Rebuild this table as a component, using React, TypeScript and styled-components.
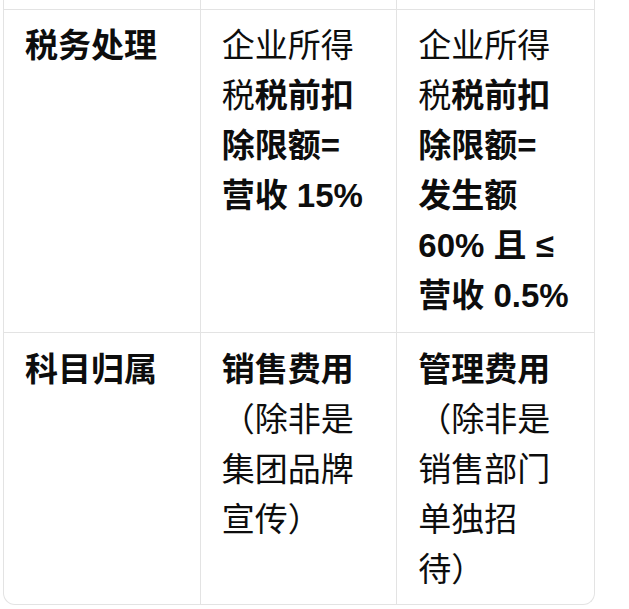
import React from 'react'
import styled, { createGlobalStyle } from 'styled-components'

const GlobalStyle = createGlobalStyle`
  html, body {
    margin: 0;
    padding: 0;
    background: #fff;
  }
  body {
    font-family: "Liberation Sans", "Noto Sans CJK SC", sans-serif;
    color: #0d0d0d;
  }
`

const Page = styled.div`
  padding-left: 3px;
  width: 592px;
`

const TableFrame = styled.div`
  border: 1px solid #e3e3e3;
  border-top: none;
  border-radius: 0 0 12px 12px;
  overflow: hidden;
`

const Table = styled.table`
  width: 100%;
  table-layout: fixed;
  border-collapse: separate;
  border-spacing: 0;
`

const Row = styled.tr<{ $cut?: boolean }>`
  td {
    height: ${p => (p.$cut ? '9px' : 'auto')};
    padding: ${p => (p.$cut ? '0' : '11px 21px 11px')};
  }
  &:last-child td {
    border-bottom: none;
    padding-top: 12px;
    padding-bottom: 9px;
  }
`

const Cell = styled.td<{ $head?: boolean }>`
  vertical-align: top;
  font-size: 33px;
  line-height: 50px;
  font-weight: ${p => (p.$head ? 700 : 400)};
  border-right: 1px solid #e3e3e3;
  border-bottom: 1px solid #e3e3e3;
  white-space: nowrap;
  &:last-child {
    border-right: none;
  }
`

const B = styled.strong`
  font-weight: 700;
`

export default function App() {
  return (
    <Page>
      <GlobalStyle />
      <TableFrame>
        <Table>
          <tbody>
            <Row $cut>
              <Cell />
              <Cell />
              <Cell />
            </Row>
            <Row>
              <Cell $head>税务处理</Cell>
              <Cell>
                企业所得<br />税<B>税前扣<br />除限额=<br />营收 15%</B>
              </Cell>
              <Cell>
                企业所得<br />税<B>税前扣<br />除限额=<br />发生额<br />60% 且 ≤<br />营收 0.5%</B>
              </Cell>
            </Row>
            <Row>
              <Cell $head>科目归属</Cell>
              <Cell>
                <B>销售费用</B><br />（除非是<br />集团品牌<br />宣传）
              </Cell>
              <Cell>
                <B>管理费用</B><br />（除非是<br />销售部门<br />单独招<br />待）
              </Cell>
            </Row>
          </tbody>
        </Table>
      </TableFrame>
    </Page>
  )
}
